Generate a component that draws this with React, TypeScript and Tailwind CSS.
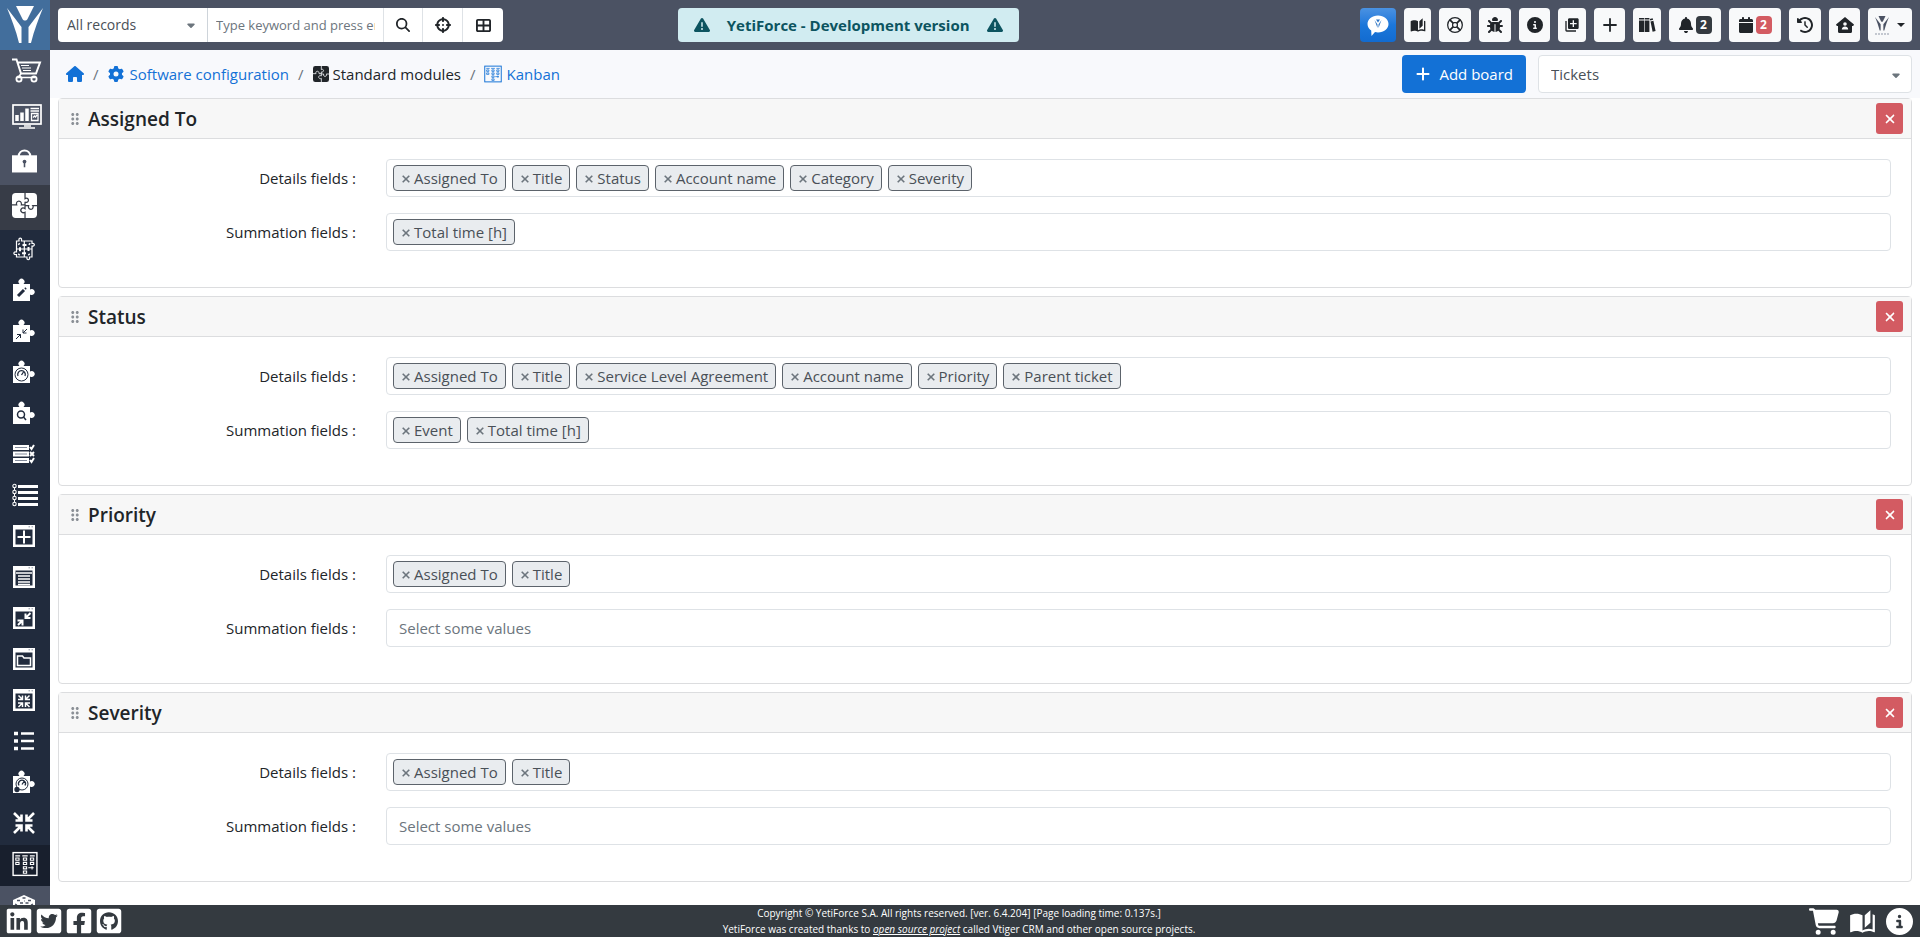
import React from 'react';
import type { ReactNode } from 'react';
import {
  FaHouse,
  FaGear,
  FaMagnifyingGlass,
  FaCrosshairs,
  FaTableCellsLarge,
  FaTriangleExclamation,
  FaBug,
  FaCircleInfo,
  FaPlus,
  FaBell,
  FaCalendar,
  FaClockRotateLeft,
  FaXmark,
  FaCaretDown,
  FaCartShopping,
} from 'react-icons/fa6';
import {
  FaLinkedin,
  FaTwitterSquare,
  FaFacebookSquare,
  FaGithubSquare,
} from 'react-icons/fa';
import { MdDragIndicator, MdLibraryAdd } from 'react-icons/md';

const PIECE = 'M1 6h6.500a3 3 0 1 1 4 0H18v5.500a3 3 0 1 1 0 5V23H1z';

function Svg({ children, className = 'size-6' }: { children: ReactNode; className?: string }) {
  return (
    <svg viewBox="0 0 24 24" className={className} fill="none" stroke="currentColor" strokeWidth="1.5" aria-hidden="true">
      {children}
    </svg>
  );
}

function Piece({ children }: { children: ReactNode }) {
  return (
    <Svg>
      <path d={PIECE} fill="currentColor" stroke="none" />
      <g stroke="#212b3d" strokeWidth="1.3">{children}</g>
    </Svg>
  );
}

function WindowIcon({ children }: { children: ReactNode }) {
  return (
    <Svg>
      <path d="M1 1h22v22H1zM3.500 5.500v15h17v-15z" fill="currentColor" fillRule="evenodd" stroke="none" />
      <path d="M16.500 2.800h1.500M19.500 2.800H21" stroke="#8f97a6" strokeWidth="1" />
      {children}
    </Svg>
  );
}

function BookIcon({ className }: { className: string }) {
  return (
    <svg viewBox="0 0 24 24" className={className} fill="currentColor" aria-hidden="true">
      <path d="M19 2L14 6.5V17.5L19 13V2M6.500 5C4.550 5 2.450 5.400 1 6.500V21.160C1 21.410 1.250 21.660 1.500 21.660C1.600 21.660 1.650 21.590 1.750 21.590C3.100 20.940 5.050 20.500 6.500 20.500C8.450 20.500 10.550 20.900 12 22C13.350 21.150 15.800 20.500 17.500 20.500C19.150 20.500 20.850 20.810 22.250 21.560C22.350 21.610 22.400 21.590 22.500 21.590C22.750 21.590 23 21.340 23 21.090V6.500C22.400 6.050 21.750 5.750 21 5.500V19C19.900 18.650 18.700 18.500 17.500 18.500C15.800 18.500 13.350 19.150 12 20V6.500C10.550 5.400 8.450 5 6.500 5Z" />
    </svg>
  );
}

function YetiMark({ className }: { className: string }) {
  return (
    <svg viewBox="0 0 36 38" className={className} fill="currentColor" aria-hidden="true">
      <path d="M9 0h18l-6.500 13c-1.200 2-3.800 2-5 0z" />
      <path d="M0 2 14.500 21v16H12C9 24 4 12 0 2z" />
      <path d="M36 2 21.500 21v16H24c3-13 8-25 12-35z" />
    </svg>
  );
}

function ModulesIcon({ className, seam }: { className: string; seam: string }) {
  return (
    <Svg className={className}>
      <rect width="24" height="24" rx="3.500" fill="currentColor" stroke="none" />
      <g stroke={seam} strokeWidth="1.200">
        <path d="M12.500 0v5.500c3.500-2 4.500 3 1.500 3.500-1 .2-1.500-.5-1.500 0V12" />
        <path d="M0 11.500h4.500c-1.500-4 4-5 4.500-1.500.2 1 0 1.500 0 1.500h3.500" />
        <path d="M12.500 12v3c-3-2-5.500 1.500-3 3.500 1 .8 2 .5 3 0V24" />
        <path d="M12.500 12H16c-1.500 4 4 5 4.300 1.500.1-1-.3-1.500-.3-1.500h4" />
      </g>
    </Svg>
  );
}

function KanbanIcon({ className }: { className: string }) {
  return (
    <Svg className={className}>
      <rect x="1" y="1.500" width="22" height="21" strokeWidth="1.300" />
      <g strokeWidth="1">
        <path d="M3 4.500h4.500M9.500 4.500h5M16.500 4.500H21" />
        <path d="M3.500 6.500h3v2h-3zM3.500 10.500h3v2h-3zM10.500 6.500h3v2h-3zM10.500 10.500h3v2h-3zM10.500 14.500h3v2h-3zM10.500 18.500h3v2h-3zM17 6.500h3v2h-3zM17 10.500h3v2h-3z" />
        <path d="M18.500 14v3M15 15.500h5" />
      </g>
    </Svg>
  );
}

type NavItem = { label: string; icon: ReactNode };

const topNav: NavItem[] = [
  {
    label: 'Marketplace',
    icon: (
      <svg viewBox="0 0 30 25" className="h-[25px] w-[30px]" fill="none" stroke="currentColor" aria-hidden="true">
        <path d="M0 1.500h4.500l4.500 14h15l4-11H6" strokeWidth="2" />
        <path d="M9 7.500h8M10 10h9M11 12.500h8" strokeWidth="1.200" />
        <path d="M9 15.500l-2.500 4h17" strokeWidth="1.600" />
        <circle cx="7" cy="21" r="2.600" strokeWidth="1.800" />
        <circle cx="22" cy="21" r="2.600" strokeWidth="1.800" />
      </svg>
    ),
  },
  {
    label: 'System monitoring',
    icon: (
      <svg viewBox="0 0 30 26" className="h-[26px] w-[30px]" fill="none" stroke="currentColor" aria-hidden="true">
        <rect x="1" y="2" width="28" height="19" strokeWidth="1.700" />
        <path d="M5 18v-6M10 18V9.500M15 18V5.500" strokeWidth="3.500" />
        <path d="M18.500 5.500H27M18.500 8H27" strokeWidth="1.500" />
        <path d="M19.500 10.500h6.500v7h-6.500zM21 14.500l1.500-1.500 1 1 1.500-2" strokeWidth="1.300" />
        <path d="M12 23h7M7 25h16" strokeWidth="1.500" />
      </svg>
    ),
  },
  {
    label: 'Security',
    icon: (
      <Svg className="size-[25px]">
        <path d="M6.500 8c0-7.500 11-7.500 11 0" strokeWidth="2" />
        <path d="M0 7h24v16.500H0z" fill="currentColor" stroke="none" />
        <circle cx="12" cy="13" r="1.800" fill="#4b5263" stroke="none" />
        <path d="M12 13v5.500" stroke="#4b5263" strokeWidth="1.500" />
      </Svg>
    ),
  },
];

const subNav: NavItem[] = [
  {
    label: 'Module management',
    icon: (
      <Svg>
        <g strokeWidth="1.200">
          <path d="M4.500 4h2.500V2.800a1.300 1.300 0 1 1 2.500 0V4H20v2.500h.7a1.300 1.300 0 1 1 0 2.500H20v11h-2.500v1a1.300 1.300 0 1 1-2.500 0v-1H4.500v-2.500h-1a1.300 1.300 0 1 1 0-2.500h1z" />
          <path d="M12.300 4v16M4.500 12H20" />
        </g>
        <path d="M10.500 8h4M10 16.200h4M8 10.300v4M16.500 10v4M6.500 6.500l1 1M17 6.500l1 1M6.500 18l1-1M17.500 18l-1-1" strokeWidth="2" />
      </Svg>
    ),
  },
  { label: 'Module editor', icon: <Piece><path d="M6 18l6-6" strokeWidth="3" /><path d="M13 11l1-1" strokeWidth="2" /></Piece> },
  { label: 'Relations', icon: <Piece><path d="M4 20l4.500-4.500M5 15.500h3.500V19M15 10l-4 4M11 10.500V14h3.500" strokeWidth="1" /></Piece> },
  { label: 'Widgets', icon: <Piece><circle cx="9.500" cy="14.500" r="6.500" strokeWidth="1" /><path d="M6 16a3.800 3.800 0 1 1 7 0M9.500 15l2-3" /></Piece> },
  { label: 'Record finder', icon: <Piece><circle cx="9" cy="13.500" r="3.500" strokeWidth="1.500" /><path d="M11.500 16l2.500 3" strokeWidth="1.500" /></Piece> },
  {
    label: 'Field dependencies',
    icon: (
      <Svg>
        <path d="M1 5.500h16M1 12h16M1 18.500h16" strokeWidth="5" />
        <path d="M3 5.500h12M3 12h12M3 18.500h12" stroke="#818999" strokeWidth="1" />
        <path d="M18 5l1.500 2L22 3M18 10l4 4M22 10l-4 4M18 18l1.500 2L22 16" strokeWidth="2" />
      </Svg>
    ),
  },
  {
    label: 'Layout editor',
    icon: (
      <svg viewBox="0 0 27 24" className="h-6 w-[27px]" fill="none" stroke="currentColor" aria-hidden="true">
        <path d="M6 3.500h20M6 9.500h20M6 15.500h20M6 21.500h20" strokeWidth="3.200" />
        <path d="M2.500 3v18" strokeWidth="1" />
        <g fill="#212b3d" strokeWidth="1.100">
          <circle cx="2.500" cy="3" r="1.700" />
          <circle cx="2.500" cy="9" r="1.700" />
          <circle cx="2.500" cy="15" r="1.700" />
          <circle cx="2.500" cy="21" r="1.700" />
        </g>
      </svg>
    ),
  },
  { label: 'Quick create', icon: <WindowIcon><path d="M12 6.500v13M5.500 13h13" strokeWidth="2" /></WindowIcon> },
  { label: 'Record list', icon: <WindowIcon><path d="M4 8h16M6 11h12M6 14h12M6 17h12M6 19.500h12" strokeWidth="1.300" /></WindowIcon> },
  { label: 'Record merge', icon: <WindowIcon><path d="M6 19l4-4M5.500 14.500h5v5M18.500 7l-5 5M13.500 7.500v4.500h5" strokeWidth="2" /></WindowIcon> },
  { label: 'Documents', icon: <WindowIcon><path d="M5.500 9h5l1.500 2h6.500v7.500h-13z" strokeWidth="1.500" /></WindowIcon> },
  {
    label: 'Record compression',
    icon: (
      <WindowIcon>
        <path d="M6.500 7.500l4 4M10.500 7.500v4H6M17.500 7.500l-4 4M13.500 7.500v4H18M6.500 19l4-4M10.500 19v-4H6M17.500 19l-4-4M13.500 19v-4H18" strokeWidth="1.500" />
      </WindowIcon>
    ),
  },
  {
    label: 'Field lists',
    icon: (
      <Svg>
        <path d="M9 4.500h13M9 12h13M9 19.500h13" strokeWidth="2.500" />
        <path d="M2 4.500h4M2 12h4M2 19.500h4" strokeWidth="3.500" />
      </Svg>
    ),
  },
  {
    label: 'Dashboards',
    icon: (
      <Piece>
        <circle cx="10" cy="14" r="6" strokeWidth="1" />
        <path d="M7 15.500a3.500 3.500 0 1 1 6 0M10 14.500l2-3" />
        <circle cx="5" cy="19.500" r="2" fill="#212b3d" />
      </Piece>
    ),
  },
  {
    label: 'Inward arrows',
    icon: (
      <Svg>
        <path
          d="M2 2l7 7M9.500 3.500v6h-6M22 2l-7 7M14.500 3.500v6h6M2 22l7-7M9.500 20.500v-6h-6M22 22l-7-7M14.500 20.500v-6h6"
          strokeWidth="2.600"
        />
      </Svg>
    ),
  },
  { label: 'Kanban', icon: <KanbanIcon className="size-[26px]" /> },
];

type HeaderAction = { label: string; icon: ReactNode; width: string; badge?: { text: string; color: string } };

const headerActions: HeaderAction[] = [
  { label: 'Documentation', width: 'w-[27px]', icon: <BookIcon className="size-4" /> },
  {
    label: 'Support',
    width: 'w-8',
    icon: (
      <Svg className="size-4">
        <circle cx="12" cy="12" r="11" strokeWidth="1.900" />
        <rect x="8.500" y="8.500" width="7" height="7" rx="2.500" strokeWidth="1.900" />
        <path d="M4 4l5.500 5.500M20 4l-5.500 5.500M4 20l5.500-5.500M20 20l-5.500-5.500" strokeWidth="2.600" />
      </Svg>
    ),
  },
  { label: 'Report a bug', width: 'w-8', icon: <FaBug className="size-4" /> },
  { label: 'Information', width: 'w-[31px]', icon: <FaCircleInfo className="size-4" /> },
  { label: 'Quick create', width: 'w-7', icon: <MdLibraryAdd className="size-4" /> },
  {
    label: 'Add',
    width: 'w-[31px]',
    icon: (
      <svg viewBox="0 0 14 14" className="size-[14px]" stroke="currentColor" strokeWidth="1.800" strokeLinecap="round" aria-hidden="true">
        <path d="M7 1v12M1 7h12" />
      </svg>
    ),
  },
  {
    label: 'Knowledge base',
    width: 'w-7',
    icon: (
      <svg viewBox="0 0 17 16" className="h-4 w-[17px]" fill="currentColor" aria-hidden="true">
        <path d="M0 1h5v1.500H0zM0 3.500h5V15H0zM5.600 1h4.800v1.500H5.600zM5.600 3.500h4.800V15H5.600zM10.800 2l2.800-.8.500 1.600-2.800.8zM11.500 4.500l2.900-.8L16.600 14l-3 .8z" />
      </svg>
    ),
  },
  { label: 'Notifications', width: 'w-[52px]', icon: <FaBell className="h-4 w-[14px]" />, badge: { text: '2', color: 'bg-[#343a40]' } },
  { label: 'Calendar', width: 'w-[52px]', icon: <FaCalendar className="h-4 w-[14px]" />, badge: { text: '2', color: 'bg-[#d35b62]' } },
  { label: 'History', width: 'w-8', icon: <FaClockRotateLeft className="size-4" /> },
  {
    label: 'Home',
    width: 'w-[31px]',
    icon: (
      <svg viewBox="0 0 18 16" className="h-4 w-[18px]" fill="currentColor" aria-hidden="true">
        <path d="M9 0l9 7.500-.8 1.500H16v5.500c0 .8-.5 1.500-1.500 1.500h-11C2.500 16 2 15.300 2 14.500V9H.8L0 7.500z" />
        <circle cx="9" cy="7" r="1.800" fill="#f8f9fa" />
        <path d="M5.800 12.500c0-4 6.400-4 6.400 0z" fill="#f8f9fa" />
      </svg>
    ),
  },
];

const boards = [
  {
    title: 'Assigned To',
    details: ['Assigned To', 'Title', 'Status', 'Account name', 'Category', 'Severity'],
    summation: ['Total time [h]'],
  },
  {
    title: 'Status',
    details: ['Assigned To', 'Title', 'Service Level Agreement', 'Account name', 'Priority', 'Parent ticket'],
    summation: ['Event', 'Total time [h]'],
  },
  { title: 'Priority', details: ['Assigned To', 'Title'], summation: [] },
  { title: 'Severity', details: ['Assigned To', 'Title'], summation: [] },
];

function TagField({ id, label, values }: { id: string; label: string; values: string[] }) {
  return (
    <div className="grid grid-cols-[1fr_5fr]">
      <label htmlFor={id} className="self-center px-[15px] text-right">
        {label} :
      </label>
      <div className="px-[15px]">
        <div className="flex h-[38px] items-center gap-[6px] rounded border border-[#dee2e6] bg-white px-[6px] text-[#495057]">
          {values.map((value) => (
            <span key={value} className="flex h-[26px] items-center gap-1 rounded border border-[#5c636b] bg-[#e9ecef] pr-[7px] pl-2 whitespace-nowrap">
              <button type="button" aria-label={'Remove ' + value} className="text-[#6c757d]">
                <svg viewBox="0 0 8 8" className="mt-px size-2" stroke="currentColor" strokeWidth="1.600" aria-hidden="true">
                  <path d="M.7.7l6.600 6.600M7.300.7L.7 7.300" />
                </svg>
              </button>
              {value}
            </span>
          ))}
          <input
            id={id}
            type="text"
            placeholder={values.length ? undefined : 'Select some values'}
            className="min-w-0 flex-1 bg-transparent px-[6px] outline-none placeholder:text-[#6c757d]"
          />
        </div>
      </div>
    </div>
  );
}

function Board({ title, details, summation }: (typeof boards)[number]) {
  const key = title.toLowerCase().replace(' ', '-');
  return (
    <section className="rounded border border-[#dcdddf] bg-white">
      <header className="flex h-10 items-center border-b border-[#dcdddf] bg-[#f7f7f7] pr-2 pl-[7px]">
        <MdDragIndicator className="size-[18px] text-[#8b9096]" aria-hidden="true" />
        <h2 className="ml-1 flex-1 text-[19px] font-semibold text-[#212529]">{title}</h2>
        <button type="button" aria-label={'Delete ' + title} className="flex h-[31px] w-[27px] items-center justify-center rounded-[3px] bg-[#d35b62] text-white">
          <FaXmark className="size-[14px]" />
        </button>
      </header>
      <div className="flex flex-col gap-4 px-[5px] pt-5 pb-9">
        <TagField id={key + '-details'} label="Details fields" values={details} />
        <TagField id={key + '-summation'} label="Summation fields" values={summation} />
      </div>
    </section>
  );
}

function TopBar() {
  return (
    <header className="flex h-[50px] shrink-0 items-center bg-[#4b5263] pr-2 text-[#212529]">
      <a href="#home" aria-label="YetiForce" className="mr-2 flex h-[50px] w-[50px] items-center justify-center bg-[#426e9c] text-white">
        <YetiMark className="h-[38px] w-9" />
      </a>
      <form className="mr-1 flex h-[34px] overflow-hidden rounded bg-white text-sm" onSubmit={(e) => e.preventDefault()}>
        <div className="relative w-[149px]">
          <select aria-label="Search in" className="h-full w-full appearance-none pl-[9px] text-[#495057] outline-none">
            <option>All records</option>
          </select>
          <FaCaretDown className="pointer-events-none absolute top-[11px] right-[10px] size-3 text-[#6c757d]" />
        </div>
        <input aria-label="Keyword" type="text" placeholder="Type keyword and press enter" className="w-[176px] border-l border-[#ced4da] px-2 text-[13px] outline-none placeholder:text-[#6c757d]" />
        <button type="submit" aria-label="Search" className="flex w-[39px] items-center justify-center border-l border-[#dee2e6]"><FaMagnifyingGlass className="size-[14px]" /></button>
        <button type="button" aria-label="Advanced search" className="flex w-10 items-center justify-center border-l border-[#dee2e6]"><FaCrosshairs className="size-4" /></button>
        <button type="button" aria-label="Global view" className="flex w-[41px] items-center justify-center border-l border-[#dee2e6]"><FaTableCellsLarge className="size-[15px]" /></button>
      </form>
      <div className="flex-1" />
      <div className="flex h-[34px] items-center gap-[17px] rounded bg-[#d1ecf1] px-4 text-[15px] font-bold text-[#0c5460]">
        <FaTriangleExclamation className="size-4" />
        <span>YetiForce - Development version</span>
        <FaTriangleExclamation className="size-4" />
      </div>
      <div className="flex-2" />
      <div className="flex items-center gap-2">
        <button type="button" aria-label="Chat" className="flex h-[34px] w-9 items-center justify-center rounded bg-linear-to-b from-[#4a92e2] from-0% via-[#1b77da] via-50% to-[#126bd0]">
          <svg viewBox="0 0 24 24" className="size-6" aria-hidden="true">
            <path d="M12 2.500c6 0 10.500 3.800 10.500 8.500S18 19.500 12 19.500c-1 0-2-.1-3-.4L5.500 23l-.3-5.500C3 16 1.500 13.700 1.500 11 1.500 6.300 6 2.500 12 2.500z" fill="white" />
            <path d="M10 6.500h4L12 9.500zM8.500 7l3 4.500V15zM15.500 7l-3 4.500V15z" fill="#2a73c4" />
          </svg>
        </button>
        {headerActions.map((action) => (
          <button key={action.label} type="button" aria-label={action.label} className={'flex h-[34px] items-center justify-center gap-[3px] rounded bg-[#f8f9fa] ' + action.width}>
            {action.icon}
            {action.badge && (
              <span className={'flex h-[18px] w-4 items-center justify-center rounded text-xs font-bold text-white ' + action.badge.color}>{action.badge.text}</span>
            )}
          </button>
        ))}
        <button type="button" aria-label="User menu" className="flex h-[34px] w-11 items-center justify-center gap-2 rounded bg-[#f8f9fa]">
          <span className="flex flex-col items-center gap-[2px] text-[#4b5263]">
            <YetiMark className="h-[15px] w-[14px]" />
            <svg viewBox="0 0 14 2" className="h-[2px] w-[14px]" stroke="#8f97a6" aria-hidden="true"><path d="M0 1h14" strokeDasharray="2 1" /></svg>
          </span>
          <svg viewBox="0 0 8 4" className="h-1 w-2" fill="#212529" aria-hidden="true"><path d="M0 0h8L4 4z" /></svg>
        </button>
      </div>
    </header>
  );
}

function Sidebar() {
  return (
    <nav aria-label="Settings" className="w-[50px] shrink-0 overflow-hidden bg-[#212b3d] text-white">
      <div className="bg-[#4b5263]">
        {topNav.map((item) => (
          <a key={item.label} href="#menu" aria-label={item.label} className="flex h-[45px] items-center pb-1 pl-3">{item.icon}</a>
        ))}
      </div>
      <a href="#modules" aria-label="Standard modules" className="flex h-[45px] items-center bg-[#373c47] pb-1 pl-3">
        <ModulesIcon className="size-[25px]" seam="#373c47" />
      </a>
      {subNav.map((item) => (
        <a
          key={item.label}
          href="#menu"
          aria-label={item.label}
          className={'flex h-[41px] items-center pb-1 pl-3 ' + (item.label === 'Kanban' ? 'bg-[#181f2d]' : '')}
        >
          {item.icon}
        </a>
      ))}
      <a href="#menu" aria-label="Modules" className="flex h-[45px] items-start bg-[#4b5263] pt-2 pl-3">
        <Svg>
          <path d="M1 6l11-5 11 5v12H1z" fill="currentColor" stroke="none" />
          <path d="M5 6.500h3M10.500 4h3M16 6.500h3M8 9h3M13.500 9h3M3 10l2 1M19 11l2-1M12 7h.5" stroke="#4b5263" strokeWidth="1.300" />
        </Svg>
      </a>
    </nav>
  );
}

function Breadcrumb() {
  const slash = <span className="text-[#6c757d]">/</span>;
  return (
    <nav aria-label="Breadcrumb" className="flex flex-1 items-center gap-[9px] pl-4 text-[#1371d6]">
      <a href="#home" aria-label="Home"><FaHouse className="size-[18px]" /></a>
      {slash}
      <a href="#settings" className="flex items-center gap-[6px]"><FaGear className="size-4" />Software configuration</a>
      {slash}
      <span className="flex items-center gap-1 text-[#212529]"><ModulesIcon className="size-4" seam="#f8f9fc" />Standard modules</span>
      {slash}
      <a href="#kanban" className="flex items-center gap-1"><KanbanIcon className="size-[18px]" />Kanban</a>
    </nav>
  );
}

function Footer() {
  return (
    <footer className="flex h-8 shrink-0 items-center justify-between bg-[#343a40] pr-[7px] pl-[5px] text-white">
      <div className="flex flex-1 items-center gap-[2px]">
        <a href="#linkedin" aria-label="LinkedIn"><FaLinkedin className="size-7" /></a>
        <a href="#twitter" aria-label="Twitter"><FaTwitterSquare className="size-7" /></a>
        <a href="#facebook" aria-label="Facebook"><FaFacebookSquare className="size-7" /></a>
        <a href="#github" aria-label="GitHub"><FaGithubSquare className="size-7" /></a>
      </div>
      <p className="text-center text-[10px] leading-4">
        Copyright © YetiForce S.A. All rights reserved. [ver. 6.4.204] [Page loading time: 0.137s.]
        <br />
        YetiForce was created thanks to <a href="#source" className="italic underline">open source project</a> called Vtiger CRM and other open source projects.
      </p>
      <div className="flex flex-1 items-center justify-end gap-[10px]">
        <a href="#shop" aria-label="Shop"><FaCartShopping className="h-[27px] w-[30px]" /></a>
        <a href="#docs" aria-label="Documentation"><BookIcon className="size-[27px]" /></a>
        <a href="#about" aria-label="About"><FaCircleInfo className="size-[27px]" /></a>
      </div>
    </footer>
  );
}

export default function App() {
  return (
    <div className="flex h-screen flex-col overflow-hidden bg-white font-['Open_Sans','Noto_Sans',sans-serif] text-[15px] leading-6 text-[#212529]">
      <TopBar />
      <div className="flex min-h-0 flex-1">
        <Sidebar />
        <main className="min-w-0 flex-1 overflow-hidden">
          <div className="flex h-12 items-center bg-[#f8f9fc]">
            <Breadcrumb />
            <button type="button" className="mr-3 flex h-[38px] items-center gap-2 rounded bg-[#1371d6] px-[13px] text-white">
              <FaPlus className="size-4" />Add board
            </button>
            <div className="relative mr-2 w-1/5">
              <select aria-label="Module" className="h-[38px] w-full appearance-none rounded border border-[#dee2e6] bg-white pl-3 text-[#495057] outline-none">
                <option>Tickets</option>
              </select>
              <FaCaretDown className="pointer-events-none absolute top-[14px] right-[10px] size-3 text-[#6c757d]" />
            </div>
          </div>
          <div className="flex flex-col gap-2 px-2">
            {boards.map((board) => (
              <Board key={board.title} {...board} />
            ))}
          </div>
        </main>
      </div>
      <Footer />
    </div>
  );
}
